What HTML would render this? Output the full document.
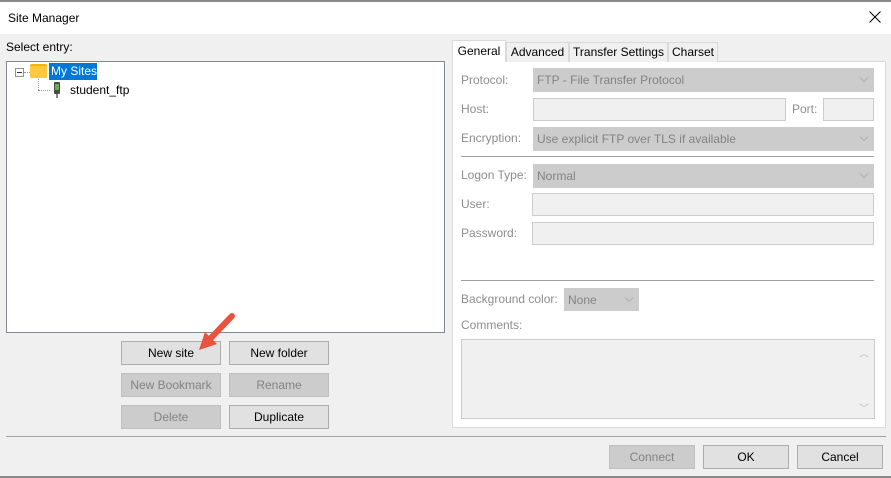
<!DOCTYPE html>
<html><head><style>
*{box-sizing:border-box;margin:0;padding:0}
body{width:891px;height:478px;background:#f0f0f0;font-family:"Liberation Sans",sans-serif;font-size:12px;color:#000;position:relative;overflow:hidden}
.a{position:absolute}
.btn{position:absolute;background:#e1e1e1;border:1px solid #adadad;text-align:center;line-height:22px;font-size:12px}
.dis{background:#cccccc;border-color:#bfbfbf;color:#838383}
.lbl{position:absolute;color:#8d8d8d;font-size:12px}
.sel{position:absolute;background:#cccccc;border:1px solid #cccccc;color:#838383;padding-left:3px;line-height:23px}
.sel:after{content:"";position:absolute;right:6px;top:6px;width:5px;height:5px;border-right:1px solid #b0b0b0;border-bottom:1px solid #b0b0b0;transform:rotate(45deg)}
.inp{position:absolute;background:#f0f0f0;border:1px solid #cccccc}
.hr{position:absolute;height:1px;background:#a0a0a0}
.tab{position:absolute;top:42px;height:20px;border:1px solid #d9d9d9;border-bottom:none;background:#f0f0f0;text-align:center;line-height:18px}
</style></head><body>
<div class="a" style="left:0;top:0;width:891px;height:2px;background:#8a8a8a"></div>
<div class="a" style="left:0;top:2px;width:891px;height:32px;background:#fff"></div>
<div class="a" style="left:8px;top:11px;font-size:12px">Site Manager</div>
<svg class="a" style="left:869px;top:11px" width="12" height="12" viewBox="0 0 12 12"><path d="M0.5 0.5L11.5 11.5M11.5 0.5L0.5 11.5" stroke="#000" stroke-width="1"/></svg>
<div class="a" style="left:6px;top:40px">Select entry:</div>
<div class="a" style="left:6px;top:61px;width:439px;height:272px;background:#fff;border:1px solid #828790"></div>
<div class="a" style="left:15px;top:68px;width:9px;height:9px;border:1px solid #919191;background:#fff"></div>
<div class="a" style="left:17px;top:72px;width:5px;height:1px;background:#333"></div>
<div class="a" style="left:24px;top:72px;width:6px;border-top:1px dotted #999"></div>
<div class="a" style="left:38px;top:77px;height:13px;border-left:1px dotted #999"></div>
<div class="a" style="left:38px;top:90px;width:12px;border-top:1px dotted #999"></div>
<div class="a" style="left:30px;top:64px;width:17px;height:14px;background:#f4b400;border-radius:2px"></div>
<div class="a" style="left:30px;top:66px;width:17px;height:12px;background:#ffc83d;border-radius:1px"></div>
<div class="a" style="left:49px;top:63px;width:48px;height:17px;background:#0078d7;color:#fff;padding-left:2px;line-height:17px">My Sites</div>
<div class="a" style="left:54px;top:82px;width:6px;height:12px;background:#4a4a4a;border-radius:1px"></div>
<div class="a" style="left:55px;top:84px;width:4px;height:6px;background:#6ab04c"></div>
<div class="a" style="left:56px;top:94px;width:2px;height:4px;background:#888"></div>
<div class="a" style="left:70px;top:83px">student_ftp</div>
<div class="btn" style="left:121px;top:341px;width:100px;height:24px">New site</div>
<div class="btn" style="left:229px;top:341px;width:100px;height:24px">New folder</div>
<div class="btn dis" style="left:121px;top:373px;width:100px;height:24px">New Bookmark</div>
<div class="btn dis" style="left:229px;top:373px;width:100px;height:24px">Rename</div>
<div class="btn dis" style="left:121px;top:405px;width:100px;height:24px">Delete</div>
<div class="btn" style="left:229px;top:405px;width:100px;height:24px">Duplicate</div>
<svg class="a" style="left:195px;top:310px" width="45" height="45" viewBox="0 0 45 45"><path d="M37 6 L14 30" stroke="#e8523e" stroke-width="6" stroke-linecap="round"/><path d="M4 40 L10 22 L22 34 Z" fill="#e8523e"/></svg>
<div class="a" style="left:452px;top:61px;width:434px;height:367px;background:#fff;border:1px solid #d9d9d9"></div>
<div class="tab" style="left:452px;top:40px;height:22px;width:54px;background:#fff;line-height:20px">General</div>
<div class="tab" style="left:506px;width:63px">Advanced</div>
<div class="tab" style="left:569px;width:99px">Transfer Settings</div>
<div class="tab" style="left:668px;width:50px">Charset</div>
<div class="lbl" style="left:461px;top:73px">Protocol:</div>
<div class="sel" style="left:533px;top:68px;width:341px;height:24px">FTP - File Transfer Protocol</div>
<div class="lbl" style="left:461px;top:102px">Host:</div>
<div class="inp" style="left:533px;top:98px;width:253px;height:23px"></div>
<div class="lbl" style="left:792px;top:102px">Port:</div>
<div class="inp" style="left:823px;top:98px;width:51px;height:23px"></div>
<div class="lbl" style="left:461px;top:131px">Encryption:</div>
<div class="sel" style="left:533px;top:127px;width:341px;height:24px">Use explicit FTP over TLS if available</div>
<div class="hr" style="left:461px;top:156px;width:413px"></div>
<div class="lbl" style="left:461px;top:168px">Logon Type:</div>
<div class="sel" style="left:533px;top:164px;width:341px;height:24px">Normal</div>
<div class="lbl" style="left:461px;top:197px">User:</div>
<div class="inp" style="left:532px;top:193px;width:342px;height:23px"></div>
<div class="lbl" style="left:461px;top:226px">Password:</div>
<div class="inp" style="left:532px;top:222px;width:342px;height:23px"></div>
<div class="hr" style="left:461px;top:280px;width:413px"></div>
<div class="lbl" style="left:461px;top:292px">Background color:</div>
<div class="sel" style="left:564px;top:288px;width:75px;height:23px;line-height:22px">None</div>
<div class="lbl" style="left:461px;top:318px">Comments:</div>
<div class="inp" style="left:461px;top:339px;width:414px;height:80px"></div>
<div class="a" style="left:859px;top:345px;color:#bbb;font-size:10px">︿</div>
<div class="a" style="left:859px;top:400px;color:#bbb;font-size:10px">﹀</div>
<div class="hr" style="left:6px;top:436px;width:880px"></div>
<div class="btn dis" style="left:609px;top:445px;width:86px;height:24px">Connect</div>
<div class="btn" style="left:703px;top:445px;width:86px;height:24px">OK</div>
<div class="btn" style="left:797px;top:445px;width:86px;height:24px">Cancel</div>
<div class="a" style="left:0;top:476px;width:891px;height:2px;background:#8a8a8a"></div>
</body></html>
